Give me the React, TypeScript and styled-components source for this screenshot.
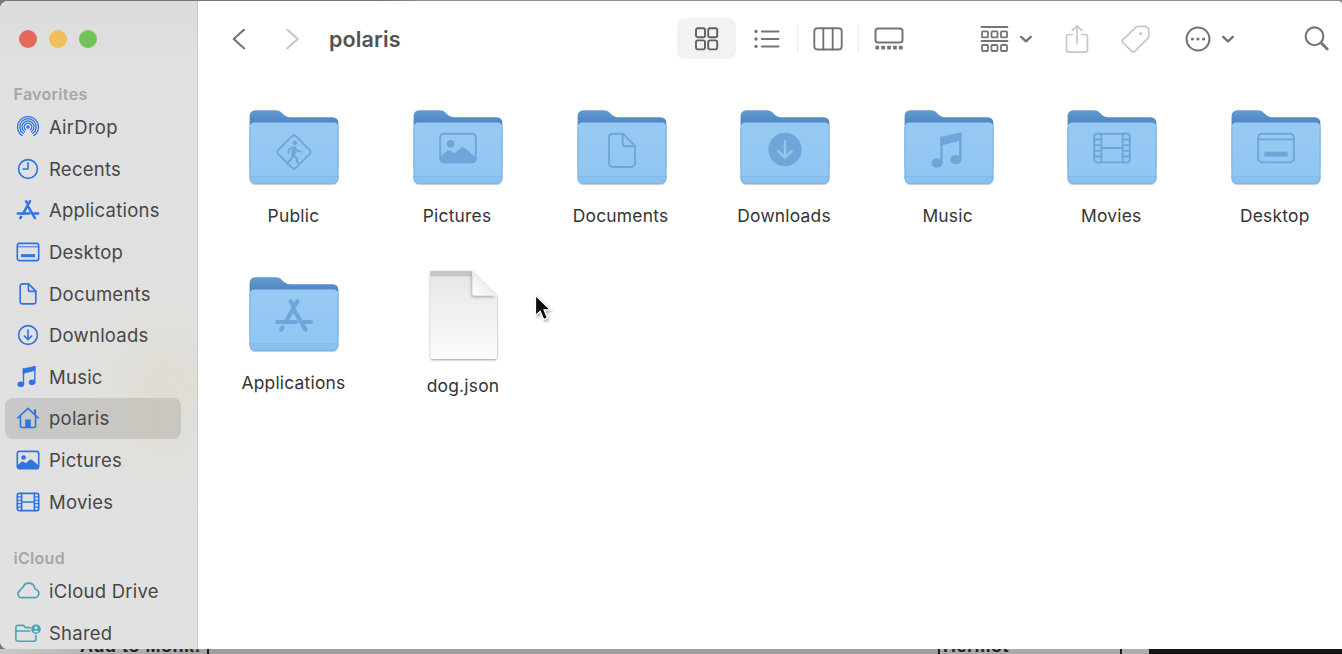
import React from "react";
import styled, { createGlobalStyle, css } from "styled-components";

const GlobalStyle = createGlobalStyle`
  * { box-sizing: border-box; }
  body {
    margin: 0;
    overflow: hidden;
    font-family: Inter, "Liberation Sans", sans-serif;
    background: #9d9d9d;
  }
  svg { display: block; flex: none; }
`;

const Screen = styled.div`
  position: relative;
  width: 1342px;
  height: 654px;
  overflow: hidden;
  display: flex;
  flex-direction: column;
  background: linear-gradient(90deg, #77757a 0, #77757a 380px, #8b8b8b 420px);
`;

const Window = styled.div`
  display: flex;
  height: 647.5px;
  flex: none;
  margin-top: 1px;
  background: #fff;
  border-radius: 8px 4px 0 8px;
  overflow: hidden;
  position: relative;
  z-index: 1;
`;

const Sidebar = styled.nav`
  width: 198px;
  flex: none;
  border-right: 1.5px solid #cbcbcb;
  background:
    radial-gradient(ellipse 110px 130px at 165px 390px, rgba(222, 219, 206, 0.75), rgba(224, 222, 213, 0.4) 55%, rgba(225, 225, 225, 0) 100%),
    linear-gradient(#dcdcdc, #e0e0e0 70px, #e1e1e1);
`;

const TrafficLights = styled.div`
  display: flex;
  gap: 11.5px;
  height: 76.5px;
  align-items: center;
  padding-left: 19px;
`;

const Light = styled.span<{ $color: string }>`
  width: 18.4px;
  height: 18.4px;
  border-radius: 50%;
  background: ${(p) => p.$color};
`;

const SectionTitle = styled.h2<{ $height: number }>`
  margin: 0;
  height: ${(p) => p.$height}px;
  display: flex;
  align-items: flex-end;
  padding: 0 0 2.5px 13.5px;
  font-size: 16px;
  line-height: 20px;
  font-weight: 600;
  letter-spacing: 0.3px;
  color: #a6a6a6;
`;

const SideItem = styled.div<{ $active?: boolean; $color?: string }>`
  display: flex;
  align-items: center;
  height: 41.65px;
  width: 176px;
  margin-left: 5px;
  padding-left: 11px;
  gap: 9px;
  font-size: 18.5px;
  letter-spacing: 0.24px;
  color: #474747;
  white-space: nowrap;
  border-radius: 8px;
  svg { color: ${(p) => p.$color ?? "#2f74e0"}; }
  ${(p) =>
    p.$active &&
    css`
      background: linear-gradient(90deg, #c8c8c8, #c8c7c3 60%, #c9c7bd 85%, #c8c6c0);
    `}
`;

const Main = styled.main`
  flex: 1;
  min-width: 0;
  overflow: hidden;
  display: flex;
  flex-direction: column;
`;

const Toolbar = styled.header`
  display: flex;
  align-items: center;
  height: 75px;
  flex: none;
  color: #747474;
`;

const ToolSlot = styled.div<{ $width: number; $before?: number; $faint?: boolean; $selected?: boolean }>`
  flex: none;
  display: flex;
  align-items: center;
  justify-content: center;
  width: ${(p) => p.$width}px;
  height: 41px;
  margin-left: ${(p) => p.$before ?? 0}px;
  ${(p) => p.$faint && "color: #c6c6c6;"}
  ${(p) => p.$selected && "background: #f2f2f2; border-radius: 8px; color: #606060;"}
`;

const Separator = styled.span`
  width: 1px;
  height: 29px;
  background: #ececec;
`;

const Title = styled.h1`
  margin: 0 0 0 28px;
  width: 348px;
  flex: none;
  font-size: 21.5px;
  letter-spacing: 0.15px;
  font-weight: 600;
  color: #525252;
`;

const FileGrid = styled.div`
  display: grid;
  grid-template-columns: repeat(7, 163.55px);
  grid-auto-rows: 166.5px;
  padding: 32px 0 0 14.7px;
`;

const FileCell = styled.figure<{ $shift?: number; $lift?: number }>`
  margin: 0;
  display: flex;
  flex-direction: column;
  align-items: center;
  padding-left: ${(p) => p.$shift ?? 0}px;
  margin-top: ${(p) => -(p.$lift ?? 0)}px;
`;

const FileLabel = styled.figcaption<{ $gap: number }>`
  margin-top: ${(p) => p.$gap}px;
  padding-right: 2px;
  font-size: 17.4px;
  letter-spacing: 0.22px;
  line-height: 22px;
  color: #343434;
  white-space: nowrap;
`;

const Pointer = styled.div`
  position: absolute;
  left: 531px;
  top: 291.5px;
  z-index: 2;
`;

const Backdrop = styled.div`
  display: flex;
  height: 6px;
  flex: none;
`;

const BackdropPane = styled.div<{ $width: number; $bg: string; $edge?: boolean; $indent?: number }>`
  width: ${(p) => p.$width}px;
  flex: none;
  height: 6px;
  overflow: hidden;
  display: flex;
  align-items: flex-end;
  background: ${(p) => p.$bg};
  padding-left: ${(p) => p.$indent ?? 0}px;
  ${(p) => p.$edge && "border-right: 2px solid #1d1d1d;"}
  font: 700 18px/18px "Liberation Sans", sans-serif;
  letter-spacing: 0.5px;
  color: #222;
  white-space: nowrap;
`;

type GlyphName =
  | "airdrop" | "recents" | "apps" | "desktop" | "doc" | "down" | "downSolid"
  | "music" | "home" | "picture" | "movie" | "cloud" | "shared" | "walk";

const glyphs: Record<GlyphName, React.ReactNode> = {
  airdrop: (
    <g strokeWidth="1.25">
      <path d="M6.2 20.7a10.4 10.4 0 1 1 11.6 0" />
      <path d="M7.3 18.6a8.2 8.2 0 1 1 9.4 0" />
      <path d="M8.5 16.8a6 6 0 1 1 7 0" />
      <path d="M9.8 15.1a3.8 3.8 0 1 1 4.4 0" />
      <path d="M12 12.2l-4.8 9.2h9.6z" fill="#e1e1e1" stroke="none" />
      <circle cx="12" cy="12" r="1.7" fill="currentColor" stroke="none" />
    </g>
  ),
  recents: (
    <>
      <circle cx="12" cy="12" r="9.4" />
      <path d="M12 5.8V12H7" />
    </>
  ),
  apps: (
    <g strokeWidth="2.5">
      <path d="M10 3.2l1.8 3M14 3.2L7.1 15.6M5.1 18.8l-.8 1.4" />
      <path d="M12.3 8.8l6.6 11.4" />
      <path d="M1.8 15.6h11.4M17.8 15.6h4.4" />
    </g>
  ),
  desktop: (
    <>
      <rect x="1.3" y="3.4" width="21.4" height="17.2" rx="2.4" />
      <path d="M1.5 6.8h21" strokeWidth="1" />
      <rect x="5" y="14.2" width="14" height="3" fill="currentColor" stroke="none" />
    </>
  ),
  doc: (
    <>
      <path d="M6.4 1.9h6.2l7.2 7.3v10.5a2.2 2.2 0 0 1-2.2 2.2H6.4a2.2 2.2 0 0 1-2.2-2.2V4.1a2.2 2.2 0 0 1 2.2-2.2z" />
      <path d="M12.4 2v6a1.4 1.4 0 0 0 1.4 1.4h6" />
    </>
  ),
  down: (
    <>
      <circle cx="12" cy="12" r="9.4" />
      <path d="M12 7v9.4M8.400 13l3.600 3.600 3.600-3.600" />
    </>
  ),
  downSolid: (
    <>
      <circle cx="12" cy="12" r="10" fill="currentColor" stroke="none" />
      <path d="M12 7v9.600M8 13l4 4 4-4" stroke="#93c6f1" strokeWidth="1.500" />
    </>
  ),
  music: (
    <g transform="translate(-1.200 -.4)">
      <path d="M8.400 4.200L20.400 1.600v4.200L8.400 8.800z" fill="currentColor" stroke="currentColor" strokeWidth=".6" />
      <path d="M8.700 4.400v15M20 2v15.400" strokeWidth="1.400" />
      <ellipse cx="6" cy="19.700" rx="3.300" ry="2.800" fill="currentColor" stroke="none" />
      <ellipse cx="17.300" cy="17.600" rx="3.300" ry="2.800" fill="currentColor" stroke="none" />
    </g>
  ),
  home: (
    <>
      <path d="M1.600 12L12 2.400 22.400 12" />
      <path d="M4.400 10v10.200a1.300 1.300 0 0 0 1.300 1.300h12.600a1.300 1.300 0 0 0 1.300-1.300V10" />
      <path d="M19 8.500V4.300" strokeWidth="2.200" />
      <path d="M9.200 21.500v-8h5.600v8z" fill="currentColor" stroke="none" />
    </>
  ),
  picture: (
    <>
      <rect x="1.300" y="3.400" width="21.400" height="17.200" rx="2.200" />
      <circle cx="7.600" cy="9.500" r="2.300" fill="currentColor" stroke="none" />
      <path d="M1.600 17.200c2-1.600 3.500-3.800 5-3.800 1.300 0 2 1.600 3 1.600 1.400 0 3.400-3.500 5-3.500 2 0 4.500 3.400 7.800 5.700v2.200a1.200 1.200 0 0 1-1.200 1.200H2.800a1.200 1.200 0 0 1-1.200-1.200z" fill="currentColor" stroke="none" />
    </>
  ),
  movie: (
    <>
      <rect x="1.300" y="3.400" width="21.400" height="17.200" rx="1.800" />
      <path d="M5.600 3.400v17.200M18.400 3.400v17.200M5.600 12h12.800" />
      <path d="M1.300 6.900h4.300M1.300 10.300h4.300M1.300 13.700h4.300M1.300 17.100h4.300M18.400 6.900h4.300M18.400 10.300h4.300M18.400 13.700h4.300M18.400 17.100h4.300" strokeWidth="1.200" />
    </>
  ),
  cloud: (
    <path d="M5.700 19.600h12.600a4.300 4.300 0 0 0 1.500-8.300c-.7-.3-1.300-.4-1.400-1.200a6 6 0 0 0-11.500-1.300c-.3.800-.6.900-1.300 1.100-.8.300-1.100 1-1.200 1.700-.1.600-.5.800-1.100 1.100A3.800 3.800 0 0 0 5.700 19.600z" transform="translate(.3 -.9)" />
  ),
  shared: (
    <>
      <path d="M14.500 6.600H9.500L7.500 4.400H1.900A2 2 0 0 0 -.1 6.400v11.800a2 2 0 0 0 2 2h16a2 2 0 0 0 2-2V14.500" />
      <path d="M-.1 10h14" />
      <circle cx="20" cy="8.200" r="4.800" fill="currentColor" stroke="none" />
      <circle cx="20" cy="6.700" r="1.500" fill="#e1e1e1" stroke="none" />
      <path d="M17.300 11.200a2.800 2.300 0 0 1 5.400 0z" fill="#e1e1e1" stroke="none" />
    </>
  ),
  walk: (
    <>
      <rect x="4.500" y="4.500" width="15" height="15" rx="1.800" transform="rotate(45 12 12)" />
      <circle cx="12.500" cy="6.500" r="1.350" fill="currentColor" stroke="none" />
      <path d="M11.800 9.400l-.5 4.100 2 1.900 1 3.100M11.400 13.800l-.8 2.200-2.200 2.200" strokeWidth="1.300" />
      <path d="M11.600 9.200l-2.500 1.100-.5 2.400M12.800 9.800l1.200 1.600 2.200.4" strokeWidth="1.100" />
      <path d="M10.800 8.700h2.400l-.3 5h-2.500z" fill="currentColor" stroke="none" />
    </>
  ),
};

function Glyph({ name, size = 24, stroke = 1.65, x, y }: {
  name: GlyphName; size?: number; stroke?: number; x?: number; y?: number;
}) {
  return (
    <svg x={x} y={y} width={size} height={size} viewBox="0 0 24 24" fill="none" stroke="currentColor"
      strokeWidth={stroke} strokeLinecap="round" strokeLinejoin="round" overflow="visible">
      {glyphs[name]}
    </svg>
  );
}

function Folder({ glyph, center }: { glyph: GlyphName; center: number }) {
  return (
    <svg width="92" height="80" viewBox="-1 0 92 80" color="#6fa6da">
      <defs>
        <linearGradient id="folderFront" x1="0" y1="0" x2="0" y2="1">
          <stop offset="0" stopColor="#97caf3" />
          <stop offset="1" stopColor="#8fc6f2" />
        </linearGradient>
        <linearGradient id="folderBack" x1="0" y1="0" x2="0" y2="1">
          <stop offset="0" stopColor="#659bd0" />
          <stop offset="0.18" stopColor="#5089c4" />
        </linearGradient>
      </defs>
      <path d="M.8 60v11.500a5.500 5.500 0 0 0 5.500 5.500h77.400a5.500 5.500 0 0 0 5.500-5.500V60z" fill="#a3adb5" opacity=".6" />
      <path d="M.6 8A5.500 5.500 0 0 1 6.500 2.300h20.300c3 0 4.600 1.200 6.700 3.100 2.600 2.500 4.500 3.800 7.800 3.800h42.500a5.500 5.500 0 0 1 5.600 5.500V60H.6z" fill="url(#folderBack)" />
      <path d="M.6 19a4.800 4.800 0 0 1 4.800-4.600h79.200a4.800 4.800 0 0 1 4.800 4.600v51.300a5.500 5.500 0 0 1-5.500 5.500H6.100a5.500 5.500 0 0 1-5.500-5.500z" fill="url(#folderFront)" />
      <path d="M.6 68.800h88.800v1.500a5.500 5.500 0 0 1-5.500 5.500H6.100a5.500 5.500 0 0 1-5.500-5.500z" fill="#8ac1ee" />
      <path d="M.6 68.500h88.800" stroke="#82b8e5" strokeWidth=".8" />
      <path d="M1 19v51.300a5.200 5.200 0 0 0 5.200 5.100h77.600a5.200 5.200 0 0 0 5.200-5.100V19" fill="none" stroke="#7fb1dc" strokeWidth=".9" />
      <Glyph name={glyph} size={40} stroke={1.150} x={25} y={center - 20} />
    </svg>
  );
}

function Page() {
  return (
    <svg width="72" height="94" viewBox="0 0 72 94">
      <defs>
        <linearGradient id="paper" x1="0" y1="0" x2="0" y2="1">
          <stop offset="0" stopColor="#e6e6e6" />
          <stop offset=".45" stopColor="#f0f0f0" />
          <stop offset="1" stopColor="#fbfbfb" />
        </linearGradient>
        <linearGradient id="curl" x1="0" y1="1" x2=".6" y2=".3">
          <stop offset="0" stopColor="#ffffff" />
          <stop offset="1" stopColor="#e9e9e9" />
        </linearGradient>
        <filter id="paperShadow" x="-10%" y="-10%" width="120%" height="120%">
          <feDropShadow dx="0" dy=".8" stdDeviation=".8" floodOpacity=".45" />
        </filter>
        <filter id="curlShadow" x="-30%" y="-30%" width="160%" height="160%">
          <feDropShadow dx="-1" dy="1.500" stdDeviation="1.500" floodOpacity=".3" />
        </filter>
      </defs>
      <path d="M2.500 2h41.500l25 25v61a2 2 0 0 1-2 2H4.500a2 2 0 0 1-2-2z" fill="url(#paper)" filter="url(#paperShadow)" />
      <path d="M2.500 2h41.500v5.500H2.500z" fill="#cacaca" />
      <path d="M3 4h41M3 6h41" stroke="#b4b4b4" strokeDasharray="1 1.500" />
      <path d="M44.500 2.500V24a2.500 2.500 0 0 0 2.500 2.500h21.500z" fill="url(#curl)" filter="url(#curlShadow)" />
    </svg>
  );
}

const Caret = () => (
  <svg width="14" height="10" viewBox="0 0 14 10" fill="none" stroke="currentColor" strokeWidth="2.400" strokeLinecap="round" strokeLinejoin="round">
    <path d="M2.200 2.900L7 7.300l4.800-4.400" />
  </svg>
);

const line = { fill: "none", stroke: "currentColor", strokeLinecap: "round", strokeLinejoin: "round" } as const;

const GridIcon = () => (
  <svg width="24" height="24" viewBox="0 0 24 24" {...line} strokeWidth="1.900">
    {[1, 13.200].map((x) => [1.200, 13.400].map((y) => <rect key={`${x}${y}`} x={x} y={y} width="9" height="9" rx="1.800" />))}
  </svg>
);

const ListIcon = () => (
  <svg width="26" height="22" viewBox="0 0 26 22" {...line} strokeWidth="2">
    {[3.400, 11, 18.400].map((y) => (
      <React.Fragment key={y}>
        <path d={`M7.800 ${y}H24.500`} />
        <circle cx="2" cy={y} r="1.700" fill="currentColor" stroke="none" />
      </React.Fragment>
    ))}
  </svg>
);

const ColumnsIcon = () => (
  <svg width="30" height="24" viewBox="0 0 30 24" {...line} strokeWidth="1.900">
    <rect x="1.300" y="1.300" width="27.400" height="21.200" rx="3" />
    <path d="M10.300 1.500v21M19.700 1.500v21" />
  </svg>
);

const GalleryIcon = () => (
  <svg width="30" height="24" viewBox="0 0 30 24" {...line} strokeWidth="2">
    <rect x="1.500" y="1.500" width="27" height="14" rx="2.500" />
    {[1.400, 7.300, 13.200, 19.100, 25].map((x) => <rect key={x} x={x} y="18.800" width="3.700" height="3.800" rx=".8" fill="currentColor" stroke="none" />)}
  </svg>
);

const GroupIcon = () => (
  <svg width="29" height="28" viewBox="0 0 29 28" {...line} strokeWidth="1.800">
    <path d="M1.500 2h26M1.500 16h26" />
    {[2, 11.500, 21].map((x) => [6.400, 20].map((y) => <rect key={`${x}${y}`} x={x} y={y} width="6" height="6" rx="1" />))}
  </svg>
);

const ShareIcon = () => (
  <svg width="24" height="30" viewBox="0 0 24 30" {...line} strokeWidth="1.700">
    <path d="M7.500 10.500H3.800A2.300 2.300 0 0 0 1.500 12.800v13a2.300 2.300 0 0 0 2.300 2.300h16.400a2.300 2.300 0 0 0 2.300-2.300v-13a2.300 2.300 0 0 0-2.300-2.300h-3.700" />
    <path d="M12 18.800V2M7.300 6.400L12 1.800l4.700 4.600" />
  </svg>
);

const TagIcon = () => (
  <svg width="31" height="30" viewBox="0 0 31 30" {...line} strokeWidth="1.700">
    <path d="M18.300 2.300h6.600a2.600 2.600 0 0 1 1.900.8l1.200 1.300c.5.500.8 1.100.8 1.900v5.600c0 .9-.3 1.600-.9 2.200L14.800 27.300a2 2 0 0 1-2.900 0L2.800 18.500a1.800 1.800 0 0 1 0-2.600L15.700 3.300a3.700 3.700 0 0 1 2.600-1z" />
    <circle cx="20.700" cy="9.400" r="1.500" fill="currentColor" stroke="none" />
  </svg>
);

const MoreIcon = () => (
  <svg width="26" height="26" viewBox="0 0 26 26" {...line} strokeWidth="2">
    <circle cx="13" cy="13" r="11.500" />
    {[7.400, 13, 18.600].map((x) => <circle key={x} cx={x} cy="13" r="1.600" fill="currentColor" stroke="none" />)}
  </svg>
);

const SearchIcon = () => (
  <svg width="26" height="26" viewBox="0 0 26 26" {...line} strokeWidth="2.100">
    <circle cx="10.500" cy="10.300" r="8.900" />
    <path d="M17.200 16.900l6 6" strokeWidth="2.800" />
  </svg>
);

const Chevron = ({ d }: { d: string }) => (
  <svg width="16" height="24" viewBox="0 0 16 24" {...line} strokeWidth="2.200"><path d={d} /></svg>
);

const favorites: { name: string; glyph: GlyphName }[] = [
  { name: "AirDrop", glyph: "airdrop" },
  { name: "Recents", glyph: "recents" },
  { name: "Applications", glyph: "apps" },
  { name: "Desktop", glyph: "desktop" },
  { name: "Documents", glyph: "doc" },
  { name: "Downloads", glyph: "down" },
  { name: "Music", glyph: "music" },
  { name: "polaris", glyph: "home" },
  { name: "Pictures", glyph: "picture" },
  { name: "Movies", glyph: "movie" },
];

const folders: { name: string; glyph: GlyphName; center: number }[] = [
  { name: "Public", glyph: "walk", center: 44 },
  { name: "Pictures", glyph: "picture", center: 40 },
  { name: "Documents", glyph: "doc", center: 42.500 },
  { name: "Downloads", glyph: "downSolid", center: 41.500 },
  { name: "Music", glyph: "music", center: 43 },
  { name: "Movies", glyph: "movie", center: 40 },
  { name: "Desktop", glyph: "desktop", center: 40 },
  { name: "Applications", glyph: "apps", center: 41 },
];

export default function App() {
  return (
    <>
      <GlobalStyle />
      <Screen>
        <Window>
          <Sidebar>
            <TrafficLights>
              <Light $color="#e2695d" />
              <Light $color="#efbf5b" />
              <Light $color="#73c35b" />
            </TrafficLights>
            <SectionTitle $height={28.700}>Favorites</SectionTitle>
            {favorites.map((f) => (
              <SideItem key={f.name} $active={f.name === "polaris"}>
                <Glyph name={f.glyph} />
                {f.name}
              </SideItem>
            ))}
            <SectionTitle $height={47.600}>iCloud</SectionTitle>
            <SideItem $color="#4ba3b5"><Glyph name="cloud" />iCloud Drive</SideItem>
            <SideItem $color="#4ba3b5"><Glyph name="shared" />Shared</SideItem>
          </Sidebar>
          <Main>
            <Toolbar>
              <ToolSlot $width={16} $before={33}><Chevron d="M13 2.800L2.700 12l10.300 9.200" /></ToolSlot>
              <ToolSlot $width={16} $before={38} $faint><Chevron d="M2.400 2.800L12.700 12 2.400 21.200" /></ToolSlot>
              <Title>polaris</Title>
              <ToolSlot $width={59} $selected><GridIcon /></ToolSlot>
              <ToolSlot $width={61}><ListIcon /></ToolSlot>
              <Separator />
              <ToolSlot $width={60}><ColumnsIcon /></ToolSlot>
              <Separator />
              <ToolSlot $width={60}><GalleryIcon /></ToolSlot>
              <ToolSlot $width={29} $before={61}><GroupIcon /></ToolSlot>
              <ToolSlot $width={14} $before={10}><Caret /></ToolSlot>
              <ToolSlot $width={24} $before={32} $faint><ShareIcon /></ToolSlot>
              <ToolSlot $width={31} $before={31} $faint><TagIcon /></ToolSlot>
              <ToolSlot $width={26} $before={34}><MoreIcon /></ToolSlot>
              <ToolSlot $width={14} $before={10}><Caret /></ToolSlot>
              <ToolSlot $width={26} $before={69}><SearchIcon /></ToolSlot>
            </Toolbar>
            <FileGrid>
              {folders.map((f) => (
                <FileCell key={f.name}>
                  <Folder glyph={f.glyph} center={f.center} />
                  <FileLabel $gap={17}>{f.name}</FileLabel>
                </FileCell>
              ))}
              <FileCell $shift={12} $lift={6}>
                <Page />
                <FileLabel $gap={12}>dog.json</FileLabel>
              </FileCell>
            </FileGrid>
          </Main>
        </Window>
        <Backdrop>
          <BackdropPane $width={209} $indent={80} $edge $bg="linear-gradient(90deg, #c9c9c9, #b3b3b3 50%, #a4a4a4)">Add to Monk:</BackdropPane>
          <BackdropPane $width={731} $edge $bg="#9e9e9e" />
          <BackdropPane $width={182} $indent={3} $edge $bg="#a9a9a9">Hermot</BackdropPane>
          <BackdropPane $width={27} $bg="#adadad" />
          <BackdropPane $width={193} $bg="#141414" />
        </Backdrop>
        <Pointer>
          <svg width="26" height="34" viewBox="0 0 26 34">
            <defs>
              <filter id="pointerShadow" x="-40%" y="-40%" width="180%" height="180%">
                <feDropShadow dx="1" dy="1.500" stdDeviation="1.500" floodOpacity=".4" />
              </filter>
            </defs>
            <path d="M4.500 3.500v20l4.700-4.300 3.500 8.300 3.800-1.600-3.500-8.100 6.200-.3z" fill="#111" stroke="#fff" strokeWidth="1.200" filter="url(#pointerShadow)" />
          </svg>
        </Pointer>
      </Screen>
    </>
  );
}
